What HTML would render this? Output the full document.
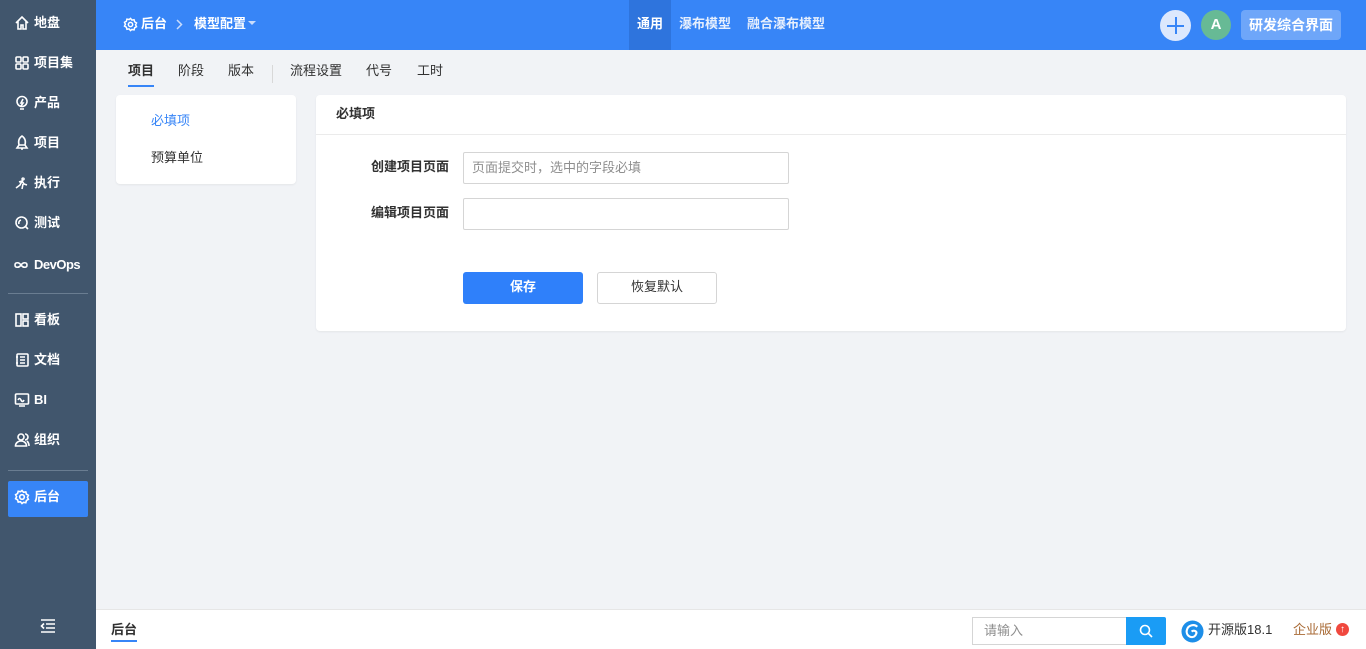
<!DOCTYPE html>
<html><head><meta charset="utf-8"><style>
*{margin:0;padding:0;box-sizing:border-box}
body{width:1366px;height:649px;overflow:hidden;font-family:"Liberation Sans","Noto Sans CJK SC",sans-serif;font-size:13px;line-height:16px;background:#f1f3f6;position:relative;color:#313131}
.side{position:absolute;left:0;top:0;width:96px;height:649px;background:#41566d;color:#fff}
.si{position:absolute;left:14px;height:20px;display:flex;align-items:center;font-weight:bold;font-size:13px}
.si svg{width:16px;height:16px;flex-shrink:0;margin-right:4px;fill:none;stroke:#fff;stroke-width:1.6}
.hr{position:absolute;left:8px;width:80px;height:1px;background:#6a7d91}
.top{position:absolute;left:96px;top:0;width:1270px;height:50px;background:#3785f7;color:#fff;font-weight:bold}
.tabs{position:absolute;left:96px;top:50px;width:1270px;height:40px}
.tab{position:absolute;top:13px;font-size:13px;color:#313131}
.card{position:absolute;background:#fff;border-radius:4px;box-shadow:0 1px 2px rgba(0,0,0,.06)}
.inp{position:absolute;border:1px solid #d5d5d5;border-radius:2px;height:32px;background:#fff}
.bot{position:absolute;left:96px;top:609px;width:1270px;height:40px;background:#fff;border-top:1px solid #e6e6e6}
</style></head><body>
<div class="side">
 <div class="si" style="top:13px"><svg viewBox="0 0 16 16"><path d="M2 8 8 2l6 6M4 6v8h3v-4h2v4h3V6"/></svg>地盘</div>
 <div class="si" style="top:53px"><svg viewBox="0 0 16 16"><rect x="2" y="2" width="5" height="5" rx="1"/><rect x="9" y="2" width="5" height="5" rx="1"/><rect x="2" y="9" width="5" height="5" rx="1"/><rect x="9" y="9" width="5" height="5" rx="1"/></svg>项目集</div>
 <div class="si" style="top:93px"><svg viewBox="0 0 16 16"><circle cx="8" cy="6.5" r="5"/><path d="M6 14h4M9 4 7 8h2l-2 3"/></svg>产品</div>
 <div class="si" style="top:133px"><svg viewBox="0 0 16 16"><path d="M8 1c3 2 4 5 3 9H5C4 6 5 3 8 1zM5 10l-2 3h10l-2-3M7 14h2"/></svg>项目</div>
 <div class="si" style="top:173px"><svg viewBox="0 0 16 16"><path d="M9 3a1 1 0 1 0 0.1 0M5 7l3-1 2 3 3 1M8 6l-2 4-4 3M9 9l-1 5"/></svg>执行</div>
 <div class="si" style="top:213px"><svg viewBox="0 0 16 16"><circle cx="7.5" cy="7.5" r="5.5"/><path d="M11.5 11.5 14 14M5 9a3 3 0 0 1 2-4"/></svg>测试</div>
 <div class="si" style="top:255px;left:12px;letter-spacing:-0.5px"><svg viewBox="0 0 18 16" style="width:18px"><path d="M9 8c-2-3-6-3-6 0s4 3 6 0 6-3 6 0-4 3-6 0"/></svg>DevOps</div>
 <div class="hr" style="top:293px"></div>
 <div class="si" style="top:310px"><svg viewBox="0 0 16 16"><rect x="2" y="2" width="5" height="12"/><rect x="9" y="2" width="5" height="5"/><rect x="9" y="9" width="5" height="5"/></svg>看板</div>
 <div class="si" style="top:350px"><svg viewBox="0 0 16 16"><rect x="3" y="2" width="11" height="12" rx="1"/><path d="M6 5h5M6 8h5M6 11h5M2 5h2M2 11h2"/></svg>文档</div>
 <div class="si" style="top:390px"><svg viewBox="0 0 16 16"><rect x="1.5" y="2" width="13" height="10" rx="1"/><path d="M4 8c1-2 2-2 3 0s2 2 3 0M5 14h6"/></svg>BI</div>
 <div class="si" style="top:430px"><svg viewBox="0 0 16 16"><circle cx="7" cy="5" r="3"/><path d="M1.5 14c0-3 2.5-5 5.5-5s5.5 2 5.5 5zM11 2a3 3 0 0 1 0 6M13 9c1 1 2 3 2 5"/></svg>组织</div>
 <div class="hr" style="top:470px"></div>
 <div style="position:absolute;left:8px;top:481px;width:80px;height:36px;background:#3785f7;border-radius:2px"></div>
 <div class="si" style="top:487px"><svg viewBox="0 0 16 16"><circle cx="8" cy="8" r="2.3"/><path d="M8 1.5l1.5 1.8 2.3-.4.6 2.2 2 1.2-1 2 1 2-2 1.2-.6 2.2-2.3-.4L8 14.5l-1.5-1.8-2.3.4-.6-2.2-2-1.2 1-2-1-2 2-1.2.6-2.2 2.3.4z"/></svg>后台</div>
 <svg style="position:absolute;left:40px;top:619px" width="16" height="14" viewBox="0 0 16 14" fill="none" stroke="#fff" stroke-width="1.6"><path d="M1 1h14M6 5h9M6 9h9M1 13h14M4 4.5 1.5 7 4 9.5"/></svg>
</div>
<div class="top">
 <svg style="position:absolute;left:27px;top:17px" width="15" height="15" viewBox="0 0 16 16" fill="none" stroke="#fff" stroke-width="1.6"><circle cx="8" cy="8" r="2.3"/><path d="M8 1.5l1.5 1.8 2.3-.4.6 2.2 2 1.2-1 2 1 2-2 1.2-.6 2.2-2.3-.4L8 14.5l-1.5-1.8-2.3.4-.6-2.2-2-1.2 1-2 -1-2 2-1.2.6-2.2 2.3.4z"/></svg>
 <span style="position:absolute;left:45px;top:16px">后台</span>
 <svg style="position:absolute;left:80px;top:19px" width="7" height="11" viewBox="0 0 7 11" fill="none" stroke="#c9dcfb" stroke-width="1.5"><path d="M1 1l4.5 4.5L1 10"/></svg>
 <span style="position:absolute;left:98px;top:16px">模型配置</span>
 <span style="position:absolute;left:152px;top:21px;border:4px solid transparent;border-top-color:#c9dcfb"></span>
 <div style="position:absolute;left:533px;top:0;width:42px;height:50px;background:#2e74dd"></div>
 <span style="position:absolute;left:541px;top:16px">通用</span>
 <span style="position:absolute;left:583px;top:16px;color:#e6effd">瀑布模型</span>
 <span style="position:absolute;left:651px;top:16px;color:#e6effd">融合瀑布模型</span>
 <div style="position:absolute;left:1064px;top:10px;width:31px;height:31px;border-radius:50%;background:#dce8fd"></div>
 <div style="position:absolute;left:1071px;top:25px;width:17px;height:2px;background:#3785f7"></div>
 <div style="position:absolute;left:1079px;top:17px;width:2px;height:17px;background:#3785f7"></div>
 <div style="position:absolute;left:1105px;top:10px;width:30px;height:30px;border-radius:50%;background:#67ba95;text-align:center;line-height:30px;font-size:15px">A</div>
 <div style="position:absolute;left:1145px;top:10px;width:100px;height:30px;border-radius:4px;background:#6ea6f9;text-align:center;line-height:30px;font-size:14px">研发综合界面</div>
</div>
<div class="tabs">
 <span class="tab" style="left:32px;font-weight:bold">项目</span>
 <div style="position:absolute;left:32px;top:35px;width:26px;height:2px;background:#3785f7"></div>
 <span class="tab" style="left:82px">阶段</span>
 <span class="tab" style="left:132px">版本</span>
 <div style="position:absolute;left:176px;top:15px;width:1px;height:18px;background:#d8d8d8"></div>
 <span class="tab" style="left:194px">流程设置</span>
 <span class="tab" style="left:270px">代号</span>
 <span class="tab" style="left:321px">工时</span>
</div>
<div class="card" style="left:116px;top:95px;width:180px;height:89px">
 <span style="position:absolute;left:35px;top:18px;color:#3785f7">必填项</span>
 <span style="position:absolute;left:35px;top:55px">预算单位</span>
</div>
<div class="card" style="left:316px;top:95px;width:1030px;height:236px">
 <span style="position:absolute;left:20px;top:11px;font-weight:bold">必填项</span>
 <div style="position:absolute;left:0;top:39px;width:100%;height:1px;background:#ebebeb"></div>
 <span style="position:absolute;left:55px;top:64px;font-weight:bold">创建项目页面</span>
 <div class="inp" style="left:147px;top:57px;width:326px"><span style="position:absolute;left:8px;top:7px;color:#8f8f8f">页面提交时，选中的字段必填</span></div>
 <span style="position:absolute;left:55px;top:110px;font-weight:bold">编辑项目页面</span>
 <div class="inp" style="left:147px;top:103px;width:326px"></div>
 <div style="position:absolute;left:147px;top:177px;width:120px;height:32px;background:#2f80fa;border-radius:3px;color:#fff;text-align:center;line-height:30px;font-weight:bold">保存</div>
 <div style="position:absolute;left:281px;top:177px;width:120px;height:32px;border:1px solid #d5d5d5;border-radius:3px;text-align:center;line-height:28px">恢复默认</div>
</div>
<div class="bot">
 <span style="position:absolute;left:15px;top:12px;font-weight:bold">后台</span>
 <div style="position:absolute;left:15px;top:30px;width:26px;height:2px;background:#3785f7"></div>
 <div style="position:absolute;left:876px;top:7px;width:156px;height:28px;border:1px solid #d5d5d5;background:#fff"><span style="position:absolute;left:11px;top:5px;color:#8f8f8f">请输入</span></div>
 <div style="position:absolute;left:1030px;top:7px;width:40px;height:28px;background:#1a9cf5;border-radius:0 2px 2px 0"></div>
 <svg style="position:absolute;left:1043px;top:14px" width="14" height="14" viewBox="0 0 14 14" fill="none" stroke="#fff" stroke-width="1.6"><circle cx="6" cy="6" r="4.5"/><path d="M9.5 9.5 13 13"/></svg>
 <svg style="position:absolute;left:1085px;top:10px" width="23" height="23" viewBox="0 0 24 24"><circle cx="12" cy="12" r="11.5" fill="#1d8ee8"/><path d="M17 7c-3-3-10-2-11 4s6 9 9 5-1-6-4-4" fill="none" stroke="#fff" stroke-width="2.2"/></svg>
 <span style="position:absolute;left:1112px;top:12px;font-size:13px">开源版18.1</span>
 <span style="position:absolute;left:1197px;top:12px;color:#a86a35">企业版</span>
 <div style="position:absolute;left:1240px;top:13px;width:13px;height:13px;border-radius:50%;background:#f0483e;color:#fff;font-size:10px;text-align:center;line-height:13px;font-weight:bold">↑</div>
</div>
</body></html>
